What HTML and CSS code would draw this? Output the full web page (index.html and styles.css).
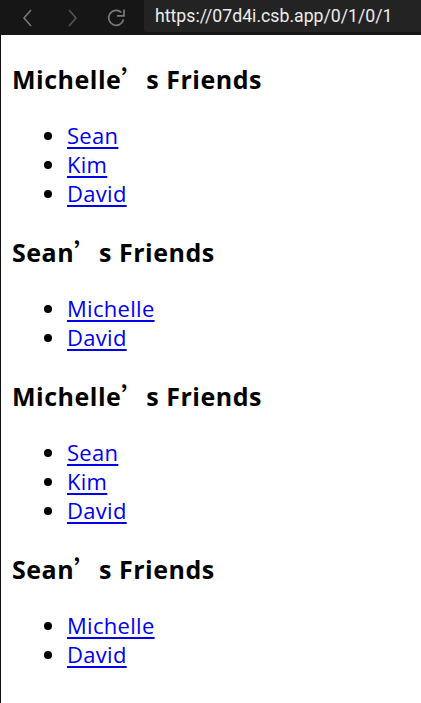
FILE: index.html
```html
<!DOCTYPE html>
<html lang="en">
<head>
<meta charset="utf-8">
<title>Friends</title>
<link rel="stylesheet" href="styles.css">
</head>
<body>
<div class="chrome">
  <div class="nav">
    <svg class="icon back" width="14" height="18" viewBox="0 0 14 18"><path d="M10 1 L3 9 L10 17" fill="none" stroke="currentColor" stroke-width="1.6"/></svg>
    <svg class="icon fwd" width="14" height="18" viewBox="0 0 14 18"><path d="M4 1 L11 9 L4 17" fill="none" stroke="currentColor" stroke-width="1.6"/></svg>
    <svg class="icon reload" width="22" height="20" viewBox="0 0 22 20"><path d="M17.5 11.5 A7.5 7.5 0 1 1 15.3 4.3" fill="none" stroke="currentColor" stroke-width="1.7"/><path d="M11 7.8 H18 V1.5" fill="none" stroke="currentColor" stroke-width="1.7"/></svg>
  </div>
  <div class="url">https://07d4i.csb.app/0/1/0/1</div>
</div>
<main class="page">
  <section class="group">
    <h2 class="title">Michelle<span class="q" lang="zh">’</span>s Friends</h2>
    <ul class="list">
      <li><a href="#">Sean</a></li>
      <li><a href="#">Kim</a></li>
      <li><a href="#">David</a></li>
    </ul>
  </section>
  <section class="group">
    <h2 class="title">Sean<span class="q" lang="zh">’</span>s Friends</h2>
    <ul class="list">
      <li><a href="#">Michelle</a></li>
      <li><a href="#">David</a></li>
    </ul>
  </section>
  <section class="group">
    <h2 class="title">Michelle<span class="q" lang="zh">’</span>s Friends</h2>
    <ul class="list">
      <li><a href="#">Sean</a></li>
      <li><a href="#">Kim</a></li>
      <li><a href="#">David</a></li>
    </ul>
  </section>
  <section class="group">
    <h2 class="title">Sean<span class="q" lang="zh">’</span>s Friends</h2>
    <ul class="list">
      <li><a href="#">Michelle</a></li>
      <li><a href="#">David</a></li>
    </ul>
  </section>
</main>
</body>
</html>
```
FILE: styles.css
```css
html, body {
  margin: 0;
  padding: 0;
  background: #fff;
  height: 100%;
}
body {
  display: flex;
  flex-direction: column;
  font-family: "Open Sans", "Noto Sans CJK SC", sans-serif;
}
.chrome {
  height: 35px;
  flex: none;
  background: #161616;
  display: flex;
  align-items: flex-start;
}
.nav {
  width: 144px;
  height: 35px;
  display: flex;
  align-items: center;
}
.icon { display: block; }
.back { color: #7a7a7a; margin-left: 21px; }
.fwd { color: #555; margin-left: 30px; }
.reload { color: #7a7a7a; margin-left: 27px; }
.url {
  flex: 1;
  height: 32px;
  background: #232323;
  border-bottom-left-radius: 3px;
  color: #ececec;
  font-family: Roboto, sans-serif;
  font-size: 17.7px;
  line-height: 32px;
  padding-left: 11px;
  white-space: nowrap;
  overflow: hidden;
}
.page {
  flex: 1;
  border-left: 1px solid #111;
  padding: 27px 10px 0 11px;
}
.group { margin: 0; }
.title {
  margin: 0;
  font-size: 25px;
  letter-spacing: 0.5px;
  line-height: 32px;
  font-weight: 700;
  color: #000;
}
.q { font-family: "Noto Sans CJK SC", sans-serif; letter-spacing: 0; }
.list {
  margin: 26px 0 27px;
  padding-left: 55px;
  font-size: 22px;
  letter-spacing: 0.3px;
  line-height: 29px;
}
.list a {
  color: #0000ee;
  text-decoration: underline;
  text-decoration-thickness: 2px;
  text-underline-offset: 3px;
}
```
